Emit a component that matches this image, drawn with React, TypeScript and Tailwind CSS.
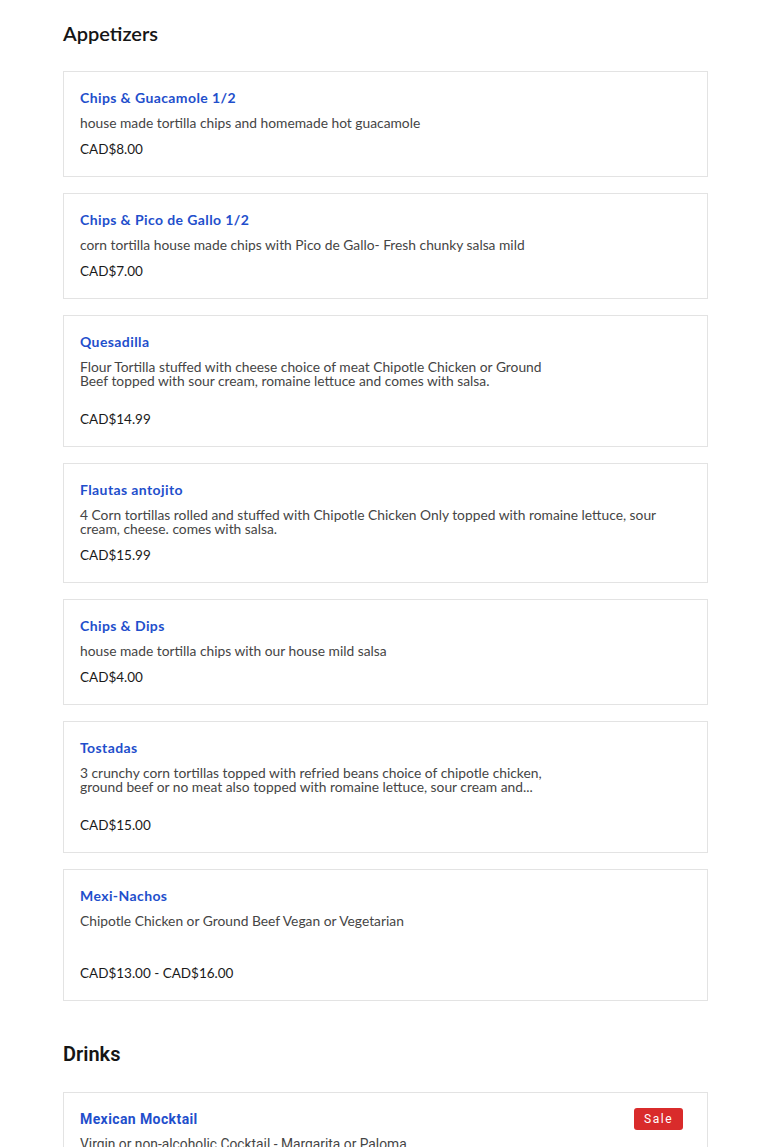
import React from "react";

interface Item {
  name: string;
  desc: string[];
  price: string;
  priceGap: string;
  sale?: boolean;
}

const appetizers: Item[] = [
  {
    name: "Chips & Guacamole 1/2",
    desc: ["house made tortilla chips and homemade hot guacamole"],
    price: "CAD$8.00",
    priceGap: "mt-[9px]",
  },
  {
    name: "Chips & Pico de Gallo 1/2",
    desc: ["corn tortilla house made chips with Pico de Gallo- Fresh chunky salsa mild"],
    price: "CAD$7.00",
    priceGap: "mt-[9px]",
  },
  {
    name: "Quesadilla",
    desc: [
      "Flour Tortilla stuffed with cheese choice of meat Chipotle Chicken or Ground",
      "Beef topped with sour cream, romaine lettuce and comes with salsa.",
    ],
    price: "CAD$14.99",
    priceGap: "mt-[21px]",
  },
  {
    name: "Flautas antojito",
    desc: [
      "4 Corn tortillas rolled and stuffed with Chipotle Chicken Only topped with romaine lettuce, sour",
      "cream, cheese. comes with salsa.",
    ],
    price: "CAD$15.99",
    priceGap: "mt-[9px]",
  },
  {
    name: "Chips & Dips",
    desc: ["house made tortilla chips with our house mild salsa"],
    price: "CAD$4.00",
    priceGap: "mt-[9px]",
  },
  {
    name: "Tostadas",
    desc: [
      "3 crunchy corn tortillas topped with refried beans choice of chipotle chicken,",
      "ground beef or no meat also topped with romaine lettuce, sour cream and...",
    ],
    price: "CAD$15.00",
    priceGap: "mt-[21px]",
  },
  {
    name: "Mexi-Nachos",
    desc: ["Chipotle Chicken or Ground Beef Vegan or Vegetarian"],
    price: "CAD$13.00 - CAD$16.00",
    priceGap: "mt-[35px]",
  },
];

const drinks: Item[] = [
  {
    name: "Mexican Mocktail",
    desc: ["Virgin or non-alcoholic Cocktail - Margarita or Paloma"],
    price: "",
    priceGap: "mt-[9px]",
    sale: true,
  },
];

const Card = ({ item, font }: { item: Item; font: string }) => (
  <div className={`border border-[#e3e3e3] bg-white px-4 pt-[15px] pb-[17px] ${font}`}>
    <div className="flex items-center justify-between pr-[8px]">
      <h3 className="text-[14px] leading-[22px] font-bold tracking-[0.4px] text-[#1f4fcc]">
        {item.name}
      </h3>
      {item.sale && (
        <span className="rounded-[3px] bg-[#d92b2b] px-[10px] text-[12px] leading-[22px] tracking-[1.5px] text-white">
          Sale
        </span>
      )}
    </div>
    <div className="mt-[7px] text-[13.8px] leading-[14px] text-[#454545]">
      {item.desc.map((line) => (
        <div key={line}>{line}</div>
      ))}
    </div>
    {item.price && (
      <div className={`${item.priceGap} text-[13.5px] leading-[20px] text-[#1a1a1a]`}>
        {item.price}
      </div>
    )}
  </div>
);

const Section = ({ title, items, font }: { title: string; items: Item[]; font: string }) => (
  <section>
    <h2 className={`text-[20px] leading-[28px] font-semibold text-[#151515] ${font}`}>{title}</h2>
    <div className="mt-[24px] flex flex-col gap-4">
      {items.map((item) => (
        <Card key={item.name} item={item} font={font} />
      ))}
    </div>
  </section>
);

const App = () => {
  return (
    <div className="min-h-[1147px] bg-white">
      <div className="ml-[63px] flex w-[645px] flex-col gap-[39px] pt-[19px]">
        <Section title="Appetizers" items={appetizers} font="font-['Lato',sans-serif]" />
        <Section title="Drinks" items={drinks} font="font-['Roboto',sans-serif]" />
      </div>
    </div>
  );
};

export default App;
